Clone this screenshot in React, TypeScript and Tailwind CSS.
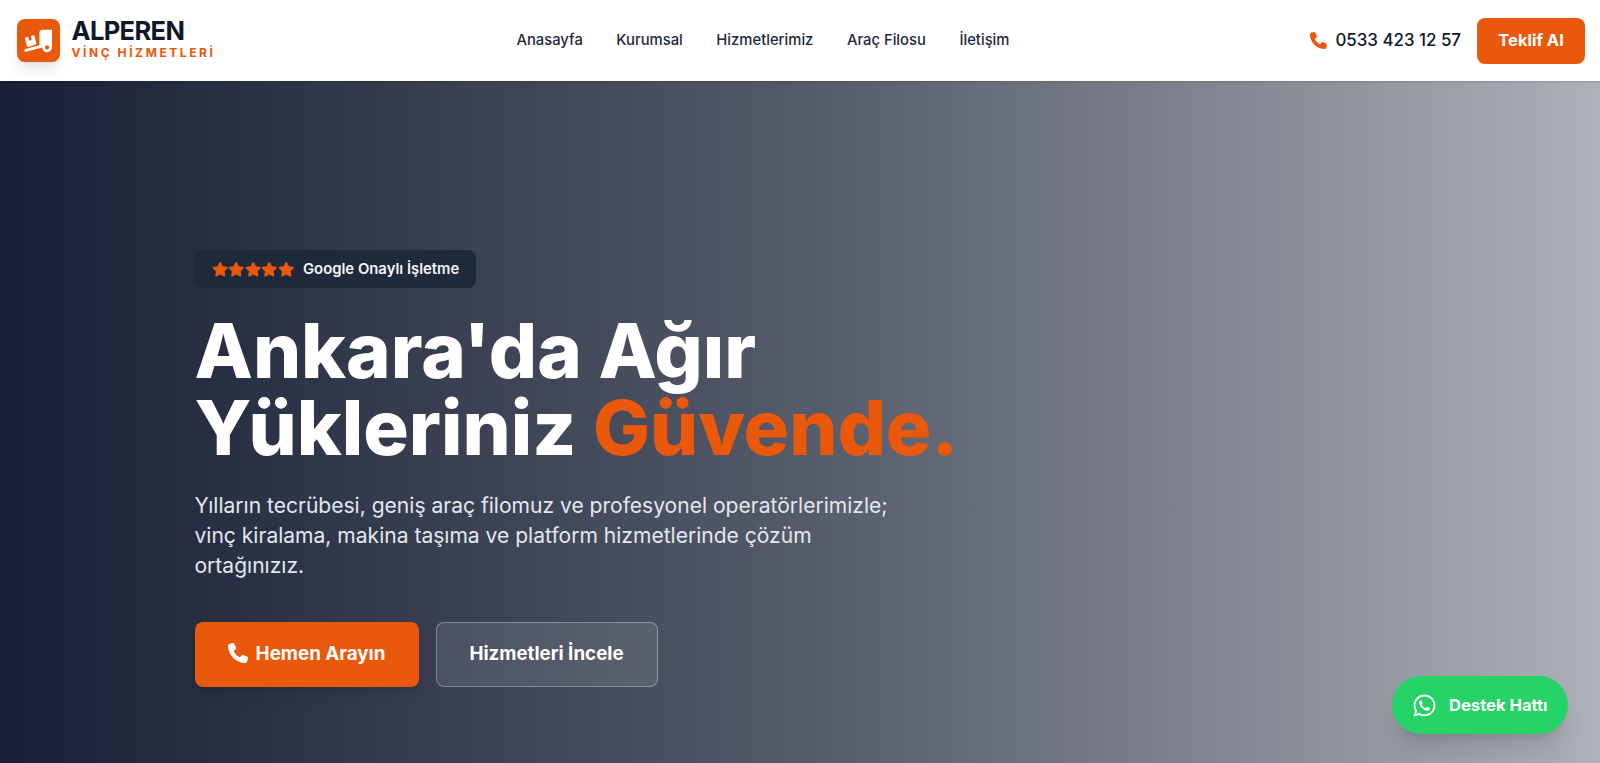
import { FaPhone, FaStar, FaTruckRampBox, FaWhatsapp } from "react-icons/fa6";

const navLinks = ["Anasayfa", "Kurumsal", "Hizmetlerimiz", "Araç Filosu", "İletişim"];

function Header() {
  return (
    <header className="h-[81px] bg-white flex items-center justify-between pl-[16.5px] pr-[15px] relative z-10 shadow-sm">
      <div className="flex items-center gap-3">
        <div className="w-[43px] h-[43px] rounded-lg bg-[#ea580c] flex items-center justify-center text-white shadow-lg">
          <FaTruckRampBox className="text-[28px]" />
        </div>
        <div className="flex flex-col -mt-0.5">
          <span className="text-[25.5px] leading-none font-bold tracking-tight text-[#0f172a]">ALPEREN</span>
          <span className="text-[12px] leading-4 mt-0.5 font-bold tracking-[0.215em] text-[#ea580c]">VİNÇ HİZMETLERİ</span>
        </div>
      </div>
      <nav className="flex items-center gap-[33.5px] text-[14.8px] font-medium text-[#1e293b]">
        {navLinks.map((link) => (
          <a key={link}>{link}</a>
        ))}
      </nav>
      <div className="flex items-center gap-4">
        <div className="flex items-center gap-2 text-[#0f172a]">
          <FaPhone className="text-[#ea580c] text-[17px]" />
          <span className="text-[16.9px] font-medium">0533 423 12 57</span>
        </div>
        <button className="h-[46px] w-[108px] rounded-lg bg-[#ea580c] text-white text-[16.5px] font-bold">Teklif Al</button>
      </div>
    </header>
  );
}

function Hero() {
  return (
    <section className="relative h-[682px] bg-gradient-to-r from-[#1a2035] via-[#545a68] via-50% to-[#aeb1ba] pl-[194.5px] pt-[169px]">
      <div className="inline-flex items-center gap-[9px] h-[38px] px-[17px] rounded-lg bg-[#1e293b] text-[#f1f5f9] text-[14.85px] font-semibold">
        <span className="flex text-[#ea580c] text-[16.5px]">
          <FaStar />
          <FaStar />
          <FaStar />
          <FaStar />
          <FaStar />
        </span>
        Google Onaylı İşletme
      </div>
      <h1 className="mt-6 text-[75.9px] leading-[77px] font-extrabold text-white">
        Ankara'da Ağır
        <br />
        Yükleriniz <span className="text-[#ea580c]">Güvende.</span>
      </h1>
      <p className="mt-[25px] w-[720px] text-[21.05px] leading-[30px] text-[#e2e8f0]">
        Yılların tecrübesi, geniş araç filomuz ve profesyonel operatörlerimizle; vinç kiralama, makina taşıma ve platform hizmetlerinde çözüm ortağınızız.
      </p>
      <div className="mt-[41px] flex gap-[17px]">
        <button className="w-[224px] h-[65px] rounded-lg bg-[#ea580c] text-white text-[18.8px] font-bold flex items-center justify-center gap-2 shadow-lg">
          <FaPhone className="text-xl -translate-y-0.5" />
          Hemen Arayın
        </button>
        <button className="w-[222px] h-[65px] rounded-lg border border-white/30 bg-white/10 text-white text-[18.8px] font-bold">
          Hizmetleri İncele
        </button>
      </div>
      <a className="absolute right-8 bottom-[29px] h-[58px] w-[176px] pl-5 rounded-full bg-[#25d366] text-white text-[16.6px] font-bold flex items-center gap-3 shadow-xl">
        <FaWhatsapp className="text-[25px]" />
        Destek Hattı
      </a>
    </section>
  );
}

export default function App() {
  return (
    <div className="font-['Inter',sans-serif] h-[763px] overflow-hidden">
      <Header />
      <Hero />
    </div>
  );
}
